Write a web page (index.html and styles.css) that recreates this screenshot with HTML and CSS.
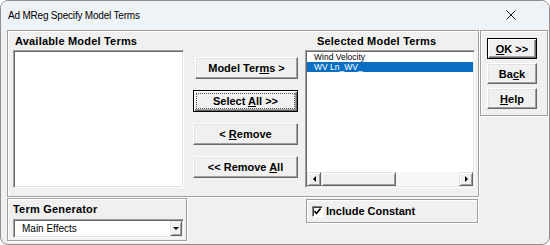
FILE: index.html
```html
<!DOCTYPE html>
<html lang="en">
<head>
    <meta charset="UTF-8">
    <meta name="viewport" content="width=device-width, initial-scale=1.0">
    <title>Ad MReg Specify Model Terms</title>
    <link rel="stylesheet" href="styles.css">
</head>
<body>
    <div class="window">
        <div class="titlebar">
            <span class="title">Ad MReg Specify Model Terms</span>
            <svg class="close" width="10" height="10" viewBox="0 0 10 10">
                <path d="M0.5 0.5 L9.5 9.5 M9.5 0.5 L0.5 9.5" stroke="#1a1a1a" stroke-width="1" fill="none"/>
            </svg>
        </div>
        <div class="content">
            <div class="top-row">
                <div class="frame main-frame">
                    <div class="col-left">
                        <div class="label">Available Model Terms</div>
                        <div class="listbox"></div>
                    </div>
                    <div class="buttons">
                        <button class="btn btn-shift">Model Ter<u>m</u>s &gt;</button>
                        <button class="btn btn-default btn-focus">Select <u>A</u>ll &gt;&gt;</button>
                        <button class="btn">&lt; <u>R</u>emove</button>
                        <button class="btn">&lt;&lt; Remove <u>A</u>ll</button>
                    </div>
                    <div class="col-right">
                        <div class="label">Selected Model Terms</div>
                        <div class="listbox selected-list">
                            <div class="items">
                                <div class="item">Wind Velocity</div>
                                <div class="item active">WV Ln_WV_</div>
                            </div>
                            <div class="hscroll">
                                <div class="sb-btn"><span class="tri-left"></span></div>
                                <div class="sb-thumb"></div>
                                <div class="sb-track"></div>
                                <div class="sb-btn"><span class="tri-right"></span></div>
                            </div>
                        </div>
                    </div>
                </div>
                <div class="frame side-frame">
                    <button class="btn btn-small btn-default"><u>O</u>K &gt;&gt;</button>
                    <button class="btn btn-small">Ba<u>c</u>k</button>
                    <button class="btn btn-small"><u>H</u>elp</button>
                </div>
            </div>
            <div class="bottom-row">
                <div class="frame term-frame">
                    <div class="label">Term Generator</div>
                    <div class="combo">
                        <span class="combo-text">Main Effects</span>
                        <div class="combo-btn"><span class="tri-down"></span></div>
                    </div>
                </div>
                <div class="frame const-frame">
                    <div class="checkbox">
                        <svg width="9" height="9" viewBox="0 0 9 9">
                            <path d="M1.5 4 L3.5 6.5 L7.5 1.5" stroke="#000" stroke-width="1.6" fill="none"/>
                        </svg>
                    </div>
                    <span>Include Constant</span>
                </div>
            </div>
        </div>
    </div>
</body>
</html>
```

FILE: styles.css
```css
* {
    box-sizing: border-box;
}
body {
    margin: 0;
    font-family: "Liberation Sans", Arial, sans-serif;
    background-color: #ffffff;
}
.window {
    width: 550px;
    height: 245px;
    border: 1px solid #8f8f8f;
    border-radius: 8px;
    background-color: #f0f0f0;
    overflow: hidden;
    display: flex;
    flex-direction: column;
}
.titlebar {
    height: 28px;
    flex: none;
    background-color: #eef3f8;
    display: flex;
    align-items: center;
    justify-content: space-between;
    padding-left: 7px;
}
.title {
    font-size: 10px;
    letter-spacing: -0.2px;
    color: #000;
}
.close {
    margin-right: 33px;
}
.content {
    flex: 1;
    padding: 1px 0 0 6px;
}
.top-row, .bottom-row {
    display: flex;
    align-items: flex-start;
}
.bottom-row {
    margin-top: 1px;
}
.frame {
    border: 1px solid #a0a0a0;
    box-shadow: inset 1px 1px #ffffff, 1px 1px #ffffff;
}
.main-frame {
    width: 472px;
    height: 167px;
    display: flex;
    align-items: flex-start;
    padding: 4px 0 0 5px;
}
.label {
    font-size: 11px;
    font-weight: bold;
    line-height: 13px;
    height: 13px;
    margin-bottom: 2px;
    letter-spacing: 0.2px;
    white-space: nowrap;
}
.col-left {
    width: 171px;
}
.col-left .label {
    padding-left: 2px;
}
.col-right {
    width: 170px;
    margin-left: 7px;
}
.col-right .label {
    padding-left: 12px;
}
.listbox {
    height: 138px;
    padding: 1px;
    background-color: #ffffff;
    border: 1px solid;
    border-color: #a0a0a0 #ffffff #ffffff #a0a0a0;
    box-shadow: inset 1px 1px #696969, inset -1px -1px #e3e3e3;
}
.selected-list {
    display: flex;
    flex-direction: column;
}
.items {
    flex: 1;
    font-size: 8.5px;
    line-height: 10px;
}
.item {
    height: 10px;
    padding-left: 7px;
    white-space: nowrap;
}
.item.active {
    background-color: #0a6fc2;
    color: #ffffff;
}
.hscroll {
    height: 14px;
    display: flex;
    background-color: #f7f7f7;
}
.sb-btn, .sb-thumb, .combo-btn {
    background-color: #f0f0f0;
    border: 1px solid;
    border-color: #e3e3e3 #696969 #696969 #e3e3e3;
    box-shadow: inset 1px 1px #ffffff, inset -1px -1px #a0a0a0;
}
.sb-btn {
    width: 14px;
    display: flex;
    align-items: center;
    justify-content: center;
}
.sb-thumb {
    width: 75px;
}
.sb-track {
    flex: 1;
}
.tri-left {
    border-top: 3px solid transparent;
    border-bottom: 3px solid transparent;
    border-right: 3px solid #000;
}
.tri-right {
    border-top: 3px solid transparent;
    border-bottom: 3px solid transparent;
    border-left: 3px solid #000;
}
.tri-down {
    border-left: 3px solid transparent;
    border-right: 3px solid transparent;
    border-top: 3px solid #000;
}
.buttons {
    width: 105px;
    margin: 22px 0 0 9px;
    display: flex;
    flex-direction: column;
    gap: 11px;
}
.btn {
    width: 105px;
    height: 22px;
    padding: 0;
    font-family: "Liberation Sans", Arial, sans-serif;
    font-size: 11px;
    font-weight: bold;
    color: #000;
    background-color: #f0f0f0;
    border: 1px solid;
    border-color: #ffffff #696969 #696969 #ffffff;
    box-shadow: inset -1px -1px #a0a0a0, inset 1px 1px #e3e3e3;
    white-space: nowrap;
}
.btn-default {
    border-color: #000;
    box-shadow: inset 1px 1px #ffffff, inset -1px -1px #696969, inset -2px -2px #a0a0a0;
}
.btn-focus {
    outline: 1px dotted #555;
    outline-offset: -4px;
}
.btn-shift {
    width: 103px;
    margin-left: 2px;
}
.side-frame {
    width: 68px;
    height: 86px;
    margin-left: 1px;
    padding: 7px 0 0 6px;
    display: flex;
    flex-direction: column;
    gap: 4px;
}
.btn-small {
    width: 50px;
    height: 21px;
}
.term-frame {
    width: 180px;
    height: 43px;
    padding: 4px 0 0 5px;
}
.term-frame .label {
    margin-bottom: 3px;
}
.combo {
    width: 171px;
    height: 19px;
    display: flex;
    align-items: center;
    padding: 1px 1px 1px 8px;
    background-color: #ffffff;
    border: 1px solid;
    border-color: #a0a0a0 #ffffff #ffffff #a0a0a0;
    box-shadow: inset 1px 1px #696969, inset -1px -1px #e3e3e3;
    font-size: 10px;
}
.combo-text {
    flex: 1;
}
.combo-btn {
    width: 12px;
    height: 15px;
    display: flex;
    align-items: center;
    justify-content: center;
}
.const-frame {
    width: 172px;
    height: 24px;
    margin: 1px 0 0 119px;
    padding-left: 5px;
    display: flex;
    align-items: center;
    gap: 3px;
    font-size: 11px;
    font-weight: bold;
}
.checkbox {
    width: 11px;
    height: 11px;
    background-color: #ffffff;
    border: 1px solid;
    border-color: #808080 #ffffff #ffffff #808080;
    box-shadow: inset 1px 1px #404040;
    display: flex;
    align-items: center;
    justify-content: center;
}
```
